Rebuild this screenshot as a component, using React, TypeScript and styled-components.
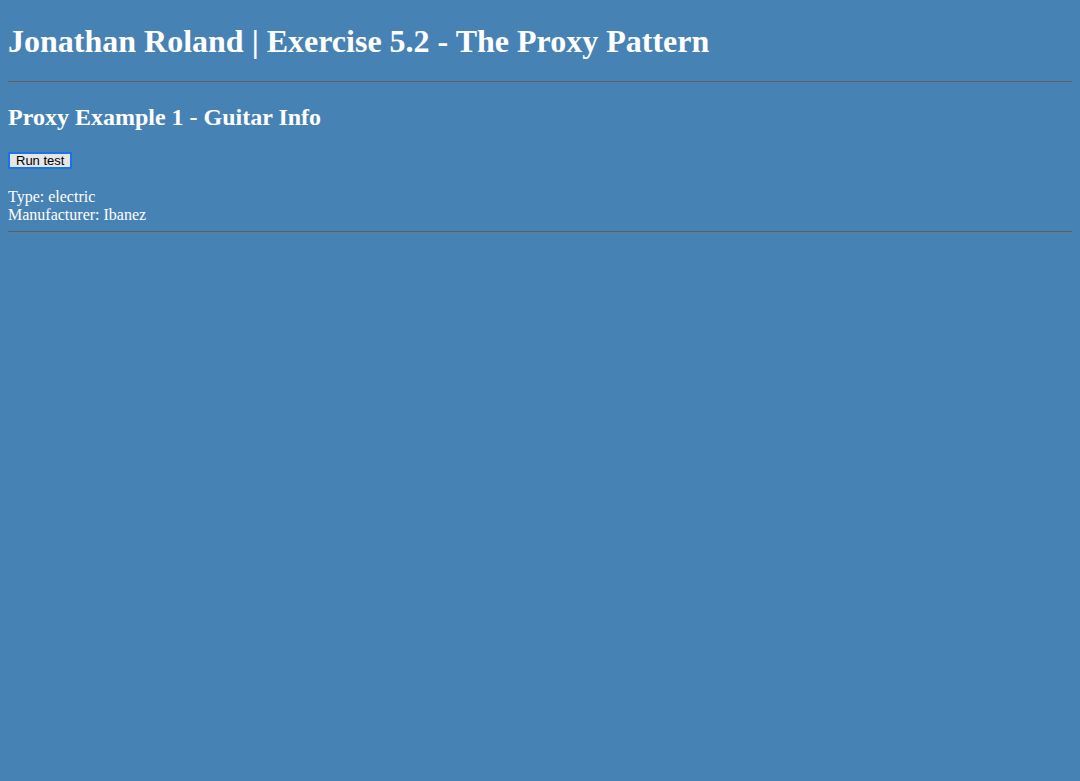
import React from "react";
import styled, { createGlobalStyle } from "styled-components";

const GlobalStyle = createGlobalStyle`
  html, body {
    background: #4682b4;
  }
  body {
    margin: 0;
    padding: 0 8px 8px;
    color: #ffffff;
    font-family: "Liberation Serif", "Times New Roman", serif;
    font-size: 16px;
  }
`;

const Page = styled.div`
  display: block;
  padding-top: 2px;
`;

const Title = styled.h1`
  font-size: 32px;
  line-height: 37px;
  font-weight: bold;
  margin: 21px 0 21px;
`;

const Rule = styled.hr<{ $top?: number }>`
  margin: ${(p) => p.$top ?? 8}px 0 8px;
  border: none;
  border-top: 1px solid #575f68;
  border-bottom: 1px solid #5d7f9e;
  height: 0;
`;

const Section = styled.section`
  display: block;
`;

const Subtitle = styled.h2`
  font-size: 24px;
  line-height: 28px;
  font-weight: bold;
  margin: 20px 0 21px;
`;

const RunButton = styled.button`
  font-family: "Liberation Sans", Arial, sans-serif;
  font-size: 13px;
  color: #000000;
  background: #e6e6e6;
  border: 2px solid #1f74dc;
  box-shadow: inset 0 0 0 1px #d8e6f6;
  padding: 0 6px;
  height: 17px;
  line-height: 13px;
  margin: 0;
  cursor: default;
  display: inline-block;
  vertical-align: top;
`;

const ButtonRow = styled.div`
  height: 18px;
`;

const Output = styled.div`
  margin-top: 18px;
  line-height: 18px;
`;

const Line = styled.div``;

export default function App() {
  return (
    <Page>
      <GlobalStyle />
      <Title>Jonathan Roland | Exercise 5.2 - The Proxy Pattern</Title>
      <Rule />
      <Section>
        <Subtitle>Proxy Example 1 - Guitar Info</Subtitle>
        <ButtonRow>
          <RunButton type="button">Run test</RunButton>
        </ButtonRow>
        <Output>
          <Line>Type: electric</Line>
          <Line>Manufacturer: Ibanez</Line>
        </Output>
      </Section>
      <Rule $top={7} />
    </Page>
  );
}
